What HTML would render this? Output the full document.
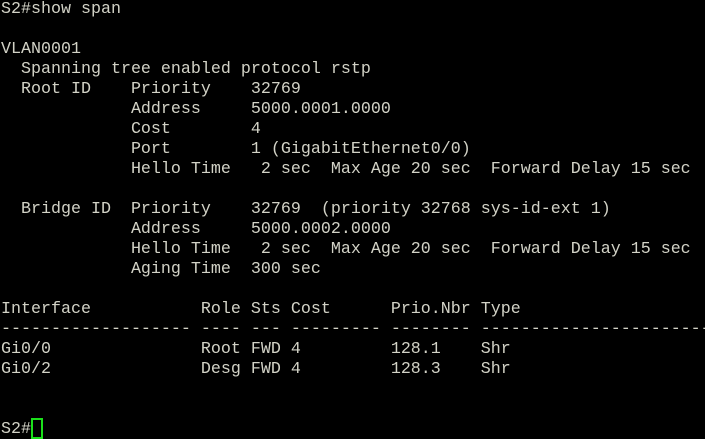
<!DOCTYPE html>
<html><head><style>
html,body{margin:0;padding:0;background:#000;width:705px;height:438px;overflow:hidden}
pre{margin:0;position:absolute;left:1px;top:0;width:704px;height:438px;overflow:hidden;font-family:"Liberation Mono",monospace;font-size:16.67px;line-height:20px;color:#d2d2c6;white-space:pre}
.cur{position:absolute;left:31px;top:418px;width:8px;height:17px;border:2px solid #1be01b}
</style></head><body>
<pre>S2#show span

VLAN0001
  Spanning tree enabled protocol rstp
  Root ID    Priority    32769
             Address     5000.0001.0000
             Cost        4
             Port        1 (GigabitEthernet0/0)
             Hello Time   2 sec  Max Age 20 sec  Forward Delay 15 sec

  Bridge ID  Priority    32769  (priority 32768 sys-id-ext 1)
             Address     5000.0002.0000
             Hello Time   2 sec  Max Age 20 sec  Forward Delay 15 sec
             Aging Time  300 sec

Interface           Role Sts Cost      Prio.Nbr Type
------------------- ---- --- --------- -------- ----------------------------
Gi0/0               Root FWD 4         128.1    Shr
Gi0/2               Desg FWD 4         128.3    Shr


S2#</pre>
<div class="cur"></div>
</body></html>
